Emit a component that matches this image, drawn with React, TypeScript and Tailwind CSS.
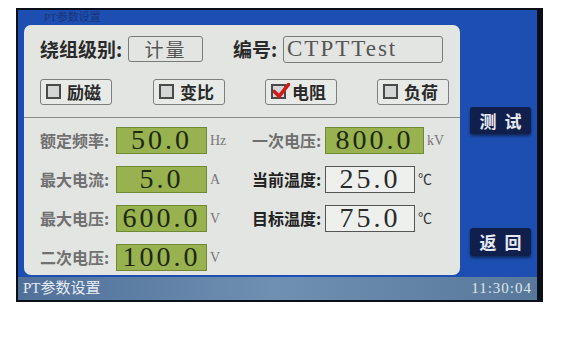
import { type ReactNode } from 'react';

const cjk = '[font-family:"Noto_Sans_CJK_SC","Noto_Sans",sans-serif]';
const serif = '[font-family:"Liberation_Serif","Noto_Sans_CJK_SC",serif]';

function CheckBox({ label, checked = false }: { label: string; checked?: boolean }) {
  return (
    <div className="flex h-[26px] w-[72px] items-center gap-[6px] rounded-[3px] border border-[#7d7f7e] bg-[#e8eae8] pl-[5px]">
      <span className="relative flex h-[15px] w-[15px] items-center justify-center border-[2px] border-[#4a4a4a] bg-[#d3d6d4]">
        {checked && (
          <svg viewBox="0 0 14 14" className="absolute -top-[3px] left-[0px] h-[17px] w-[17px]">
            <path d="M1 7 L5 11 L13 1" fill="none" stroke="#d11a1a" strokeWidth="3" strokeLinecap="round" />
          </svg>
        )}
      </span>
      <span className={`${cjk} text-[17px] font-bold leading-none text-[#2a2a2a]`}>{label}</span>
    </div>
  );
}

function Value({ v, green = true, w }: { v: string; green?: boolean; w: string }) {
  return (
    <div
      className={`${serif} flex h-[27px] items-center justify-center text-[28px] leading-none tracking-[3px] ${w} ${
        green
          ? 'bg-[#98b24f] border border-[#6f8a34] text-[#1d2812]'
          : 'bg-[#eef0ee] border border-[#555] text-[#2a2a2a]'
      }`}
    >
      {v}
    </div>
  );
}

function Field({
  label,
  dark = false,
  children,
  unit,
  labelW,
}: {
  label: string;
  dark?: boolean;
  children: ReactNode;
  unit: string;
  labelW: string;
}) {
  return (
    <div className="flex items-center">
      <span
        className={`${cjk} ${labelW} text-[16px] font-bold leading-none ${dark ? 'text-[#222]' : 'text-[#707070]'}`}
      >
        {label}
      </span>
      {children}
      <span className={`${serif} ml-[3px] text-[14px] ${dark ? 'text-[#333]' : 'text-[#777]'}`}>{unit}</span>
    </div>
  );
}

export default function App() {
  return (
    <div className="h-[352px] w-[571px] bg-white pl-[16px] pt-[8px]">
      <div className="flex h-[294px] w-[527px] flex-col border-b-[2px] border-l-[2px] border-r-[6px] border-t-[2px] border-[#0b0f1a] bg-[#1d4fb2]">
        {/* Title */}
        <div className={`${serif} h-[15px] pl-[26px] text-[11px] leading-[15px] text-[#1a3478]`}>PT参数设置</div>

        <div className="flex h-[250px]">
          {/* Gray panel */}
          <div className="ml-[6px] flex h-[250px] w-[436px] flex-col rounded-[7px] bg-[#e3e5e3]">
            <div className="mt-[10px] flex items-center pl-[16px]">
              <span className={`${cjk} w-[88px] text-[19px] font-bold text-[#2a2a2a]`}>绕组级别:</span>
              <div className={`${cjk} flex h-[26px] w-[75px] items-center justify-center rounded-[3px] border border-[#7a7a7a] text-[19px] tracking-[2px] text-[#555]`}>
                计量
              </div>
              <span className={`${cjk} ml-[30px] w-[50px] text-[19px] font-bold text-[#2a2a2a]`}>编号:</span>
              <div className={`${serif} flex h-[27px] w-[160px] items-center rounded-[3px] border border-[#7a7a7a] pl-[3px] text-[23px] tracking-[2px] text-[#555]`}>
                CTPTTest
              </div>
            </div>

            <div className="mt-[15px] flex pl-[16px]">
              <CheckBox label="励磁" />
              <div className="ml-[41px]">
                <CheckBox label="变比" />
              </div>
              <div className="ml-[40px]">
                <CheckBox label="电阻" checked />
              </div>
              <div className="ml-[40px]">
                <CheckBox label="负荷" />
              </div>
            </div>

            <div className="mt-[12px] h-[1px] w-full bg-[#8a8c8a]" />

            <div className="mt-[9px] flex pl-[16px]">
              <div className="flex w-[212px] flex-col gap-[12px]">
                <Field label="额定频率:" unit="Hz" labelW="w-[76px]">
                  <Value v="50.0" w="w-[91px]" />
                </Field>
                <Field label="最大电流:" unit="A" labelW="w-[76px]">
                  <Value v="5.0" w="w-[91px]" />
                </Field>
                <Field label="最大电压:" unit="V" labelW="w-[76px]">
                  <Value v="600.0" w="w-[91px]" />
                </Field>
                <Field label="二次电压:" unit="V" labelW="w-[76px]">
                  <Value v="100.0" w="w-[91px]" />
                </Field>
              </div>
              <div className="flex flex-col gap-[12px]">
                <Field label="一次电压:" unit="kV" labelW="w-[73px]">
                  <Value v="800.0" w="w-[99px]" />
                </Field>
                <Field label="当前温度:" unit="℃" dark labelW="w-[73px]">
                  <Value v="25.0" green={false} w="w-[90px]" />
                </Field>
                <Field label="目标温度:" unit="℃" dark labelW="w-[73px]">
                  <Value v="75.0" green={false} w="w-[90px]" />
                </Field>
              </div>
            </div>
          </div>

          {/* Side buttons */}
          <div className="ml-[10px] flex flex-col">
            <button className={`${cjk} mt-[82px] h-[27px] w-[61px] rounded-[3px] bg-[#101f4c] text-[17px] font-bold tracking-[8px] text-[#e6e9f0] shadow-[0_2px_3px_rgba(0,0,0,0.5)]`}>
              <span className="pl-[8px]">测试</span>
            </button>
            <button className={`${cjk} mt-[94px] h-[28px] w-[61px] rounded-[3px] bg-[#101f4c] text-[17px] font-bold tracking-[8px] text-[#e6e9f0] shadow-[0_2px_3px_rgba(0,0,0,0.5)]`}>
              <span className="pl-[8px]">返回</span>
            </button>
          </div>
        </div>

        {/* Status bar */}
        <div className="mt-[2px] flex h-[23px] items-center justify-between bg-gradient-to-r from-[#4f7099] via-[#7090b2] to-[#57789a] px-[5px]">
          <span className={`${serif} text-[15px] text-[#e8ecf2]`}>PT参数设置</span>
          <span className={`${serif} text-[15px] tracking-[1px] text-[#dfe5ec]`}>11:30:04</span>
        </div>
      </div>
    </div>
  );
}
